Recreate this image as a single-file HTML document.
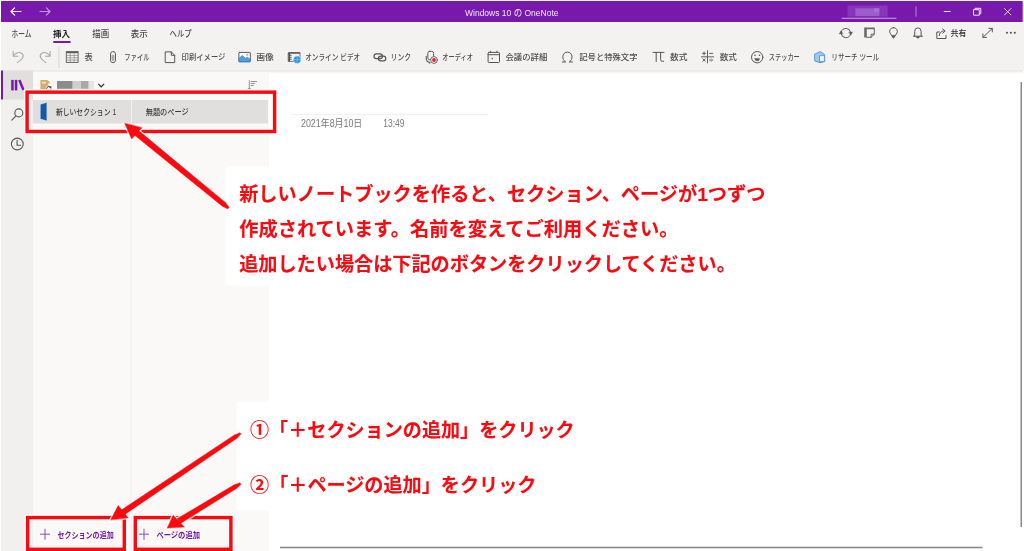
<!DOCTYPE html>
<html lang="ja">
<head>
<meta charset="utf-8">
<title>Windows 10 の OneNote</title>
<style>
html,body{margin:0;padding:0;background:#fff;overflow:hidden}
svg{display:block;font-family:"Liberation Sans", "Noto Sans CJK JP", sans-serif}
text{white-space:pre}
</style>
</head>
<body>
<svg width="1024" height="551" viewBox="0 0 1024 551">
<defs>
<linearGradient id="shadow" x1="0" y1="0" x2="0" y2="1"><stop offset="0" stop-color="#e0dfde"/><stop offset="1" stop-color="#fff" stop-opacity="0"/></linearGradient>
<filter color-interpolation-filters="sRGB" id="soft" x="-5%" y="-5%" width="110%" height="110%"><feGaussianBlur color-interpolation-filters="sRGB" stdDeviation="1.2"/></filter>
<filter color-interpolation-filters="sRGB" id="ui" filterUnits="userSpaceOnUse" x="0" y="0" width="1024" height="551"><feGaussianBlur color-interpolation-filters="sRGB" stdDeviation="0.5"/></filter>
<filter color-interpolation-filters="sRGB" id="ann" filterUnits="userSpaceOnUse" x="0" y="0" width="1024" height="551"><feGaussianBlur color-interpolation-filters="sRGB" stdDeviation="0.3"/></filter>
<filter color-interpolation-filters="sRGB" id="soft2" filterUnits="userSpaceOnUse" x="0" y="0" width="1024" height="551"><feGaussianBlur color-interpolation-filters="sRGB" stdDeviation="0.7"/></filter>
</defs>
<rect x="0" y="0" width="1024" height="551" fill="#fff"/>
<rect x="1" y="1" width="1021.7" height="21" fill="#7719aa"/>
<rect x="1" y="22" width="1023" height="48.5" fill="#f3f2f1"/>
<rect x="1" y="70.5" width="1022" height="4" fill="url(#shadow)"/>
<rect x="1" y="70.5" width="32" height="481" fill="#f1f0ef"/>
<rect x="1" y="70.5" width="32" height="29" fill="#e1dfdd"/>
<rect x="1" y="70.5" width="2" height="29" fill="#7719aa"/>
<rect x="33" y="72" width="236" height="479" fill="#faf9f8"/>
<rect x="130.5" y="100" width="1.5" height="451" fill="#f3f2f1"/>
<rect x="33" y="100" width="98" height="23.5" fill="#e1dfdd"/>
<rect x="132" y="100" width="136" height="23.5" fill="#e1dfdd"/>
<rect x="1020.5" y="82" width="1.5" height="445" fill="#8a8a8a"/>
<rect x="280" y="546.7" width="702.5" height="1.6" fill="#8a8a8a"/>
<rect x="292" y="114.1" width="195" height="1" fill="#efefef"/>
<g filter="url(#ui)">
<text x="301" y="127" font-size="10" fill="#7a7a7a" textLength="61.2" lengthAdjust="spacingAndGlyphs" >2021年8月10日</text>
<text x="383.2" y="127" font-size="10" fill="#7a7a7a" textLength="21.3" lengthAdjust="spacingAndGlyphs" >13:49</text>
</g>
<g filter="url(#ui)">
<text x="465" y="15.8" font-size="9.6" fill="#f3e9f8" textLength="93.5" lengthAdjust="spacingAndGlyphs" >Windows 10 の OneNote</text>
<g fill="none" stroke="#fff" stroke-width="1.2" stroke-linecap="round" stroke-linejoin="round"><path d="M21 11.5H11M14.6 7.9L11 11.5L14.6 15.1"/><path d="M40 11.5H50M46.4 7.9L50 11.5L46.4 15.1" opacity="0.55"/></g>
<g><rect x="847.6" y="5.4" width="40" height="11.2" fill="#8735b9"/><rect x="855.4" y="8.3" width="24" height="7.8" fill="#9d5dc8"/><rect x="874" y="8.3" width="5.3" height="4" fill="#a86fcf"/><rect x="841.7" y="17.7" width="54.7" height="1.2" fill="#bd92d9"/></g>
<rect x="915.5" y="6.4" width="1" height="10.2" fill="#b48ad0"/>
<g fill="none" stroke="#f3e4f9" stroke-width="1"><path d="M943.8 11.5H950.7"/><path d="M973.5 9.7H979.3V15.2H973.5Z M975 9.7V8.3H980.8V13.8H979.3"/><path d="M1004.3 8.3L1011.2 15.2M1011.2 8.3L1004.3 15.2"/></g>
<text x="11.6" y="36.8" font-size="8.6" fill="#4a4a4a" textLength="20" lengthAdjust="spacingAndGlyphs" font-weight="500" >ホーム</text>
<text x="53" y="36.6" font-size="8.4" fill="#222" textLength="17" lengthAdjust="spacingAndGlyphs" font-weight="bold" >挿入</text>
<text x="92.2" y="36.8" font-size="8.6" fill="#4a4a4a" textLength="17" lengthAdjust="spacingAndGlyphs" font-weight="500" >描画</text>
<text x="130.7" y="36.8" font-size="8.6" fill="#4a4a4a" textLength="17" lengthAdjust="spacingAndGlyphs" font-weight="500" >表示</text>
<text x="169.6" y="36.8" font-size="8.6" fill="#4a4a4a" textLength="22" lengthAdjust="spacingAndGlyphs" font-weight="500" >ヘルプ</text>
<rect x="53.3" y="41" width="17.3" height="2" fill="#7719aa"/>
<text x="84.6" y="60" font-size="8.4" fill="#505050" textLength="8.2" lengthAdjust="spacingAndGlyphs" font-weight="500" >表</text>
<text x="124.3" y="60" font-size="8.4" fill="#505050" textLength="25.2" lengthAdjust="spacingAndGlyphs" font-weight="500" >ファイル</text>
<text x="181.6" y="60" font-size="8.4" fill="#505050" textLength="43.8" lengthAdjust="spacingAndGlyphs" font-weight="500" >印刷イメージ</text>
<text x="256.3" y="60" font-size="8.4" fill="#505050" textLength="17.6" lengthAdjust="spacingAndGlyphs" font-weight="500" >画像</text>
<text x="305.2" y="60" font-size="8.4" fill="#505050" textLength="55" lengthAdjust="spacingAndGlyphs" font-weight="500" >オンライン ビデオ</text>
<text x="390.6" y="60" font-size="8.4" fill="#505050" textLength="20.5" lengthAdjust="spacingAndGlyphs" font-weight="500" >リンク</text>
<text x="442.2" y="60" font-size="8.4" fill="#505050" textLength="30.8" lengthAdjust="spacingAndGlyphs" font-weight="500" >オーディオ</text>
<text x="505.4" y="60" font-size="8.4" fill="#505050" textLength="42" lengthAdjust="spacingAndGlyphs" font-weight="500" >会議の詳細</text>
<text x="579.3" y="60" font-size="8.4" fill="#505050" textLength="58.2" lengthAdjust="spacingAndGlyphs" font-weight="500" >記号と特殊文字</text>
<text x="670" y="60" font-size="8.4" fill="#505050" textLength="17.4" lengthAdjust="spacingAndGlyphs" font-weight="500" >数式</text>
<text x="719.7" y="60" font-size="8.4" fill="#505050" textLength="17.2" lengthAdjust="spacingAndGlyphs" font-weight="500" >数式</text>
<text x="768.8" y="60" font-size="8.4" fill="#505050" textLength="31" lengthAdjust="spacingAndGlyphs" font-weight="500" >ステッカー</text>
<text x="831.3" y="60" font-size="8.4" fill="#505050" textLength="48" lengthAdjust="spacingAndGlyphs" font-weight="500" >リサーチ ツール</text>
<rect x="58.6" y="46.5" width="0.8" height="21.5" fill="#d0cfce"/>
<g fill="none" stroke="#555" stroke-width="1" stroke-linecap="round" stroke-linejoin="round">
<!-- undo / redo -->
<g stroke="#a8a8a8" stroke-width="1.1">
<path d="M13.2 51.6V56.2H17.8M13.4 56C15.5 52.6 19.6 51.4 22 53.6C24.6 56 22.6 59.2 17.4 62.6"/>
<path d="M50.1 51.6V56.2H45.5M49.9 56C47.800000000000004 52.6 43.7 51.4 41.3 53.6C38.7 56 40.7 59.2 45.9 62.6"/>
</g>
<!-- table -->
<g stroke="#5a5a5a" stroke-linecap="butt" stroke-linejoin="miter">
<rect x="66.3" y="51.6" width="11.8" height="10.8" stroke-width="0.9"/>
<path d="M66.3 52.5H78.1" stroke-width="1.3"/>
<path d="M66.3 55.4H78.1M66.3 57.8H78.1M66.3 60.1H78.1M70.2 53V62.4M74.2 53V62.4" stroke-width="0.6" stroke="#777"/>
</g>
<!-- clip -->
<rect x="110.5" y="51.5" width="5" height="11.2" rx="2.5" stroke-width="1" stroke="#606060"/>
<path d="M112.2 55.3V59.6a0.8 0.8 0 0 0 1.6 0V55.3" stroke-width="0.8" stroke="#707070"/>
<!-- page -->
<path d="M165.6 51.9H171.3L174.7 55.3V62.6H165.6Z M171.3 51.9V55.3H174.7"/>
<!-- image -->
<rect x="238.9" y="52.4" width="11.4" height="9.2" rx="0.6" fill="#fdfdfd" stroke="#5a5a5a"/>
<path d="M238.9 61.6V58.6L242.3 55.5L245.2 58.3L247.3 57.2L250.3 59.4V61.6Z" fill="#4a9fe6" stroke="#2a7fd0" stroke-width="0.7"/>
<circle cx="247.3" cy="54.8" r="1" fill="#f2a25a" stroke="none"/>
<!-- video -->
<path d="M288.6 53H300V61.4H288.6Z" stroke="#5a5a5a" stroke-width="0.8"/>
<path d="M288.4 52.9H300.2" stroke="#4a4a4a" stroke-width="1.3" stroke-linecap="butt"/>
<path d="M289.2 53V61.4" stroke="#4a4a4a" stroke-width="1.5" stroke-linecap="butt"/>
<path d="M289.5 55.3H291.6M289.5 57.3H291.6M289.5 59.3H291.6" stroke="#4a4a4a" stroke-width="0.9" stroke-linecap="butt"/>
<circle cx="297.1" cy="59.7" r="3.8" fill="#2f95de" stroke="#f3f2f1" stroke-width="0.5"/>
<path d="M293.6 59.7H300.6M297.1 56.2V63.2" stroke="#8cc6f0" stroke-width="0.6"/>
<!-- link -->
<rect x="374" y="53.9" width="8.4" height="4.7" rx="2.35" stroke-width="1.2"/>
<rect x="378.4" y="56.1" width="7.4" height="4.7" rx="2.35" stroke-width="1.2"/>
<!-- audio -->
<rect x="427.8" y="51.3" width="5.8" height="8.4" rx="2" stroke="#5a5a5a"/>
<path d="M426.2 56.4V58.2a4.3 4.3 0 0 0 3.6 4.2V63.3" stroke="#5a5a5a" stroke-width="1.1"/>
<circle cx="434" cy="60" r="3.4" fill="#f6f5f5" stroke="#5a5a5a" stroke-width="0.9"/>
<circle cx="434" cy="60" r="1.9" fill="#ee1c2c" stroke="none"/>
<!-- calendar -->
<rect x="488.1" y="52.4" width="11.4" height="10.1" rx="0.8"/>
<path d="M488.1 54.7H499.5M490.7 51.2V52.4M496.9 51.2V52.4"/>
<rect x="491.6" y="57.9" width="1.3" height="1.3" fill="#555" stroke="none"/>
<!-- omega -->
<path d="M562.3 62H565.7C563.3 60.4 562.8 58.6 562.8 56.8C562.8 54 564.8 52.1 567.4 52.1C570 52.1 572 54 572 56.8C572 58.6 571.5 60.4 569.1 62H572.5"/>
<!-- pi -->
<path d="M653 52.4H664M656.2 52.4V61.5M660.6 52.4V59.6Q660.6 61.3 662.4 61.3H663.6"/>
<!-- equation -->
<g stroke-width="0.9">
<path d="M707.5 50.6V63M701.4 56.8H713.7M702.5 53.4H705.6M704.05 51.9V54.9M709.5 53.4H712.8M702.8 58.8L705.3 61.3M705.3 58.8L702.8 61.3M709.5 60.1H712.8"/>
<circle cx="711.15" cy="58.6" r="0.45" fill="#555" stroke="none"/><circle cx="711.15" cy="61.6" r="0.45" fill="#555" stroke="none"/>
</g>
<!-- smiley -->
<circle cx="757.2" cy="57.2" r="5.7"/>
<circle cx="755" cy="55.3" r="0.8" fill="#555" stroke="none"/><circle cx="759.5" cy="55.3" r="0.8" fill="#555" stroke="none"/>
<path d="M754.8 58.6H759.6A2.4 2.3 0 0 1 754.8 58.6Z" fill="#555" stroke-width="0.4"/>
<!-- research -->
<path d="M815 54L820.4 51.6L824.7 54.6V61.6L820 62.7L815 61Z" fill="#9ccaf1" stroke="#4a90d9" stroke-width="0.9"/>
<rect x="820" y="55.6" width="4.4" height="6" fill="#f4f8fd" stroke="#4a90d9" stroke-width="0.8"/>
</g>
<!-- top right icons -->
<g fill="none" stroke="#555" stroke-width="1" stroke-linecap="round" stroke-linejoin="round">
<!-- sync -->
<path d="M841.2 31.9A4.9 4.9 0 0 1 850.7 32.4M850.6 34.2A4.9 4.9 0 0 1 841.1 33.7"/>
<path d="M849 32.3L852.5 31.9L851 34.9ZM842.8 33.7L839.3 34.1L840.8 31.1Z" fill="#555" stroke-width="0.4"/>
<!-- note -->
<path d="M864.2 27.4H874.7V29.3H866.8V37.6H864.2Z" fill="#6a6a6a" stroke="none"/>
<path d="M874.3 29.2V34.2L871 37.3H866.8M874.3 34.2H871.1V37.3" stroke-width="0.9"/>
<!-- bulb -->
<path d="M893.5 27.6A3.8 3.8 0 0 1 896.5 33.8L893.5 38.1L890.5 33.8A3.8 3.8 0 0 1 893.5 27.6Z"/>
<path d="M891.8 35.3H895.2L893.5 38.2Z" fill="#555" stroke-width="0.3"/>
<!-- bell -->
<path d="M914.7 36.2V31.3A3.2 3.4 0 0 1 921.1 31.3V36.2M913.4 36.2H922.5"/>
<path d="M916.3 36.7H919.5A1.6 1.5 0 0 1 916.3 36.7Z" fill="#555" stroke-width="0.3"/>
<!-- share -->
<path d="M939.5 32H936.8V38.5H946V35.5"/>
<path d="M939.2 35.6C939.6 32.6 941.4 31 944 30.9M942.6 28.9L945.2 31L942.8 33.2"/>
<!-- expand -->
<path d="M983 37.3L992.2 28.5M988.8 28.4H992.3V31.9M986.4 37.4H982.9V33.9"/>
</g>
<g fill="#444"><circle cx="1007" cy="32.7" r="0.95"/><circle cx="1010.9" cy="32.7" r="0.95"/><circle cx="1014.8" cy="32.7" r="0.95"/></g>
<!-- left nav icons -->
<g fill="#7719aa"><rect x="11.2" y="79.9" width="2.5" height="10.5"/><rect x="14.8" y="79.9" width="2.5" height="10.5"/><path d="M18.2 80.6L20.5 79.6L24.6 89.6L22.3 90.5Z"/></g>
<g fill="none" stroke="#555" stroke-width="1.1" stroke-linecap="round">
<circle cx="18.8" cy="112.9" r="4"/><path d="M16 115.9L11.8 120.2"/>
<circle cx="17.3" cy="144" r="5.9"/><path d="M17.1 140.3V145.2H20.6"/>
</g>
<!-- notebook header -->
<g>
<path d="M40.4 80H47.3L49.5 81.6V83.4H48.3V85.2H49.5V89.2H40.4Z" fill="#d6ae6a"/>
<rect x="42" y="81.8" width="4" height="1.8" fill="#f1e1c0"/>
<circle cx="48.8" cy="88.6" r="3.1" fill="#faf9f8"/>
<path d="M46.6 88.8A2.3 2.3 0 0 1 50.6 87.2M51 88.4A2.3 2.3 0 0 1 47 90M50.9 85.9V87.5H49.3" fill="none" stroke="#333" stroke-width="0.9"/>
<rect x="57" y="81" width="15.7" height="7.8" fill="#8c8c8c"/><rect x="72.7" y="81" width="8.3" height="7.8" fill="#cfcfcf"/><rect x="81" y="81" width="7.7" height="7.8" fill="#a9a9a9"/><rect x="88.7" y="81" width="5.3" height="7.8" fill="#e6e5e4"/>
<path d="M98.2 83.9L101.2 86.8L104.2 83.9" fill="none" stroke="#333" stroke-width="1.2"/>
<!-- sort -->
<path d="M249.3 80.3V89.4M247.9 88L249.3 89.6L250.7 88M250.6 81.5H257M250.6 83.6H255.2M250.6 85.6H253.6" fill="none" stroke="#777" stroke-width="0.8"/>
</g>
<!-- section tab -->
<path d="M40.6 104.6L46.6 102.8V120.4L40.6 118.8Z" fill="#1259a8" stroke="#5b9bd8" stroke-opacity="0.5" stroke-width="0.5"/>

<text x="950.4" y="35.9" font-size="8.3" fill="#333" textLength="16.1" lengthAdjust="spacingAndGlyphs" font-weight="500" >共有</text>
<text x="55.9" y="115.3" font-size="8.4" fill="#3a3a3a" textLength="60.3" lengthAdjust="spacingAndGlyphs" font-weight="500" >新しいセクション 1</text>
<text x="145.7" y="115.3" font-size="8.4" fill="#3a3a3a" textLength="43" lengthAdjust="spacingAndGlyphs" font-weight="500" >無題のページ</text>
<text x="57.5" y="537.5" font-size="8.3" fill="#7719aa" textLength="56.2" lengthAdjust="spacingAndGlyphs" font-weight="bold" >セクションの追加</text>
<text x="156.4" y="537.5" font-size="8.3" fill="#7719aa" textLength="43.6" lengthAdjust="spacingAndGlyphs" font-weight="bold" >ページの追加</text>
<g stroke="#8b4db5" stroke-width="1" fill="none"><path d="M40 534.2H50M45 528.8V539.8"/><path d="M139 534.2H149M144 528.8V539.8"/></g>
</g>
<g filter="url(#soft)"><rect x="225.5" y="166.5" width="560" height="119" rx="3" fill="#fff"/><rect x="236.3" y="401.5" width="350" height="109.5" rx="3" fill="#fff"/></g>
<g fill="none" stroke="#fff" stroke-opacity="0.8" stroke-width="6" filter="url(#soft2)"><rect x="27.1" y="92.15" width="247.5" height="39.35"/><rect x="27.7" y="517.6" width="96.6" height="31.7"/><rect x="135.3" y="517.6" width="95.6" height="31.7"/></g>
<g filter="url(#ann)" stroke-linejoin="round" stroke-linecap="round">
<g fill="none" stroke="#fa0a10" stroke-width="3.45" stroke-linejoin="miter" stroke-linecap="butt"><rect x="27.1" y="92.15" width="247.5" height="39.35"/><rect x="27.7" y="517.6" width="96.6" height="31.7"/><rect x="135.3" y="517.6" width="95.6" height="31.7"/></g>
<g stroke="#fff" stroke-opacity="0.8" stroke-width="3" stroke-linejoin="round" fill="#fff" fill-opacity="0.8" filter="url(#soft2)"><path d="M132.5 133.6L222.3 206.2L227.9 208.9L229.1 207.3L225.4 202.4L136.5 128.8Z"/><path d="M124.7 123.2L131.6 139.1L141.9 127.7Z"/><path d="M124.1 515.0L236.7 438.6L241.0 434.1L240.0 432.7L234.3 434.9L120.9 510.2Z"/><path d="M110.8 519.8L118.2 505.4L128.2 517.8Z"/><path d="M180.0 523.8L236.5 488.6L241.0 484.4L240.0 482.8L234.2 484.8L177.0 518.8Z"/><path d="M167.2 527.9L173.1 515.2L184.4 526.9Z"/></g>
<g fill="#fa0a10" stroke="#fa0a10" stroke-width="0.4" stroke-linejoin="round"><path d="M132.5 133.6L222.3 206.2L227.9 208.9L229.1 207.3L225.4 202.4L136.5 128.8Z"/><path d="M124.7 123.2L131.6 139.1L141.9 127.7Z"/><path d="M124.1 515.0L236.7 438.6L241.0 434.1L240.0 432.7L234.3 434.9L120.9 510.2Z"/><path d="M110.8 519.8L118.2 505.4L128.2 517.8Z"/><path d="M180.0 523.8L236.5 488.6L241.0 484.4L240.0 482.8L234.2 484.8L177.0 518.8Z"/><path d="M167.2 527.9L173.1 515.2L184.4 526.9Z"/></g>

<text x="239.2" y="201" font-size="19" fill="#fa0a10" textLength="526.2" lengthAdjust="spacingAndGlyphs" font-weight="bold" stroke="#fa0a10" stroke-width="0.1">新しいノートブックを作ると、セクション、ページが1つずつ</text>
<text x="239.2" y="236" font-size="19" fill="#fa0a10" textLength="439.3" lengthAdjust="spacingAndGlyphs" font-weight="bold" stroke="#fa0a10" stroke-width="0.1">作成されています。名前を変えてご利用ください。</text>
<text x="239.2" y="271.2" font-size="19" fill="#fa0a10" textLength="496.6" lengthAdjust="spacingAndGlyphs" font-weight="bold" stroke="#fa0a10" stroke-width="0.1">追加したい場合は下記のボタンをクリックしてください。</text>
<text x="250" y="437" font-size="19" fill="#fa0a10" textLength="324.7" lengthAdjust="spacingAndGlyphs" font-weight="bold" stroke="#fa0a10" stroke-width="0.1">①「＋セクションの追加」をクリック</text>
<text x="250" y="491.5" font-size="19" fill="#fa0a10" textLength="286.5" lengthAdjust="spacingAndGlyphs" font-weight="bold" stroke="#fa0a10" stroke-width="0.1">②「＋ページの追加」をクリック</text>
</g>
</svg>
</body>
</html>
